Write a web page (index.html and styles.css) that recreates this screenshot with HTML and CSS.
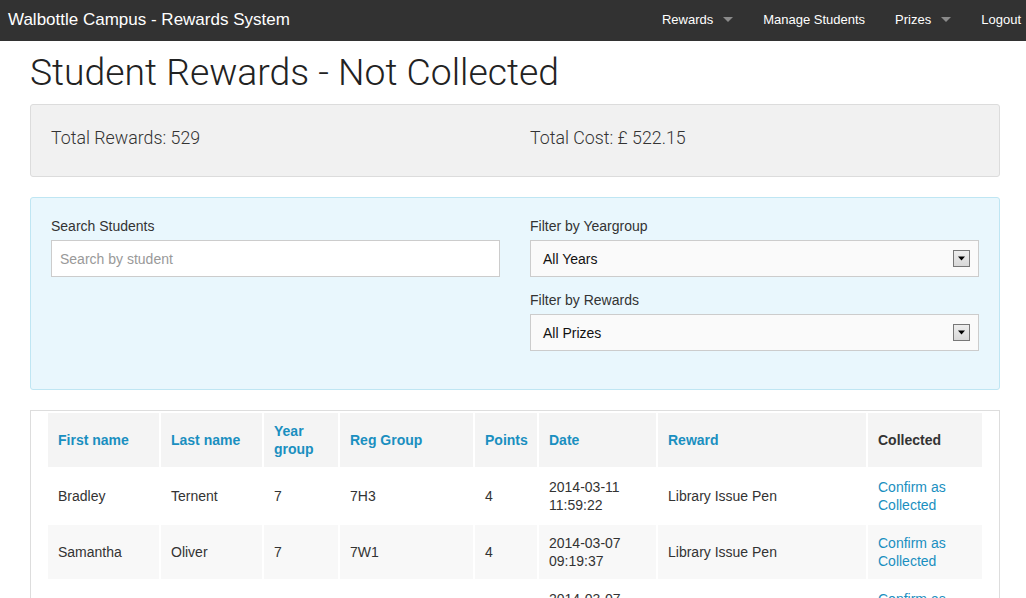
FILE: index.html
```html
<!DOCTYPE html>
<html lang="en">
<head>
<meta charset="utf-8">
<title>Student Rewards - Not Collected</title>
<link rel="stylesheet" href="styles.css">
</head>
<body>
<nav class="navbar">
  <a class="brand" href="#">Walbottle Campus - Rewards System</a>
  <ul class="nav">
    <li><a href="#">Rewards</a><span class="caret"></span></li>
    <li><a href="#">Manage Students</a></li>
    <li><a href="#">Prizes</a><span class="caret"></span></li>
    <li><a href="#">Logout</a></li>
  </ul>
</nav>
<main class="container">
  <h1 class="page-title">Student Rewards - Not Collected</h1>
  <div class="well">
    <div class="well-item">Total Rewards: 529</div>
    <div class="well-item">Total Cost: £ 522.15</div>
  </div>
  <div class="filters">
    <div class="filter-col">
      <div class="form-group">
        <label class="form-label">Search Students</label>
        <input class="form-input" type="text" placeholder="Search by student">
      </div>
    </div>
    <div class="filter-col">
      <div class="form-group">
        <label class="form-label">Filter by Yeargroup</label>
        <div class="select"><span class="select-text">All Years</span><span class="select-arrow"><svg width="9" height="5" viewBox="0 0 9 5"><path d="M1 0.5H8L4.5 4.5Z" fill="#000"/></svg></span></div>
      </div>
      <div class="form-group">
        <label class="form-label">Filter by Rewards</label>
        <div class="select"><span class="select-text">All Prizes</span><span class="select-arrow"><svg width="9" height="5" viewBox="0 0 9 5"><path d="M1 0.5H8L4.5 4.5Z" fill="#000"/></svg></span></div>
      </div>
    </div>
  </div>
  <div class="table-wrap">
    <table class="rewards">
      <colgroup>
        <col class="c1"><col class="c2"><col class="c3"><col class="c4"><col class="c5"><col class="c6"><col class="c7"><col class="c8">
      </colgroup>
      <thead>
        <tr>
          <th><a href="#">First name</a></th>
          <th><a href="#">Last name</a></th>
          <th><a href="#">Year group</a></th>
          <th><a href="#">Reg Group</a></th>
          <th><a href="#">Points</a></th>
          <th><a href="#">Date</a></th>
          <th><a href="#">Reward</a></th>
          <th>Collected</th>
        </tr>
      </thead>
      <tbody>
        <tr>
          <td>Bradley</td><td>Ternent</td><td>7</td><td>7H3</td><td>4</td>
          <td>2014-03-11 11:59:22</td><td>Library Issue Pen</td>
          <td><a href="#">Confirm as Collected</a></td>
        </tr>
        <tr>
          <td>Samantha</td><td>Oliver</td><td>7</td><td>7W1</td><td>4</td>
          <td>2014-03-07 09:19:37</td><td>Library Issue Pen</td>
          <td><a href="#">Confirm as Collected</a></td>
        </tr>
        <tr>
          <td>Jessica</td><td>Turnbull</td><td>7</td><td>7W1</td><td>4</td>
          <td>2014-03-07 09:18:52</td><td>Library Issue Pen</td>
          <td><a href="#">Confirm as Collected</a></td>
        </tr>
        <tr>
          <td>Liam</td><td>Robson</td><td>8</td><td>8H2</td><td>6</td>
          <td>2014-03-06 14:02:11</td><td>Library Issue Pen</td>
          <td><a href="#">Confirm as Collected</a></td>
        </tr>
      </tbody>
    </table>
  </div>
</main>
</body>
</html>
```
FILE: styles.css
```css
* { box-sizing: border-box; }
html, body { margin: 0; padding: 0; }
body {
  font-family: "Liberation Sans", Arial, sans-serif;
  font-size: 14px;
  color: #333;
  background: #fff;
}
a { text-decoration: none; }

.navbar {
  height: 41px;
  background: #323232;
  display: flex;
  align-items: center;
  justify-content: space-between;
  padding: 0 5px 0 8px;
}
.brand {
  color: #fff;
  font-size: 17px;
  line-height: 20px;
  padding-bottom: 2px;
}
.nav {
  list-style: none;
  margin: 0;
  padding: 0;
  display: flex;
  align-items: center;
  gap: 30px;
}
.nav li {
  display: flex;
  align-items: center;
  padding-bottom: 2px;
}
.nav a {
  color: #fff;
  font-size: 13px;
  line-height: 18px;
}
.caret {
  width: 0;
  height: 0;
  margin-left: 10px;
  border-left: 5px solid transparent;
  border-right: 5px solid transparent;
  border-top: 5px solid #8a8a8a;
}

.container {
  width: 970px;
  margin-left: 30px;
}
.page-title {
  font-family: "Roboto", "Liberation Sans", sans-serif;
  font-weight: 300;
  font-size: 37.3px;
  line-height: 40px;
  color: #222;
  margin: 11px 0 12px 0;
}
.well {
  display: grid;
  grid-template-columns: 1fr 1fr;
  column-gap: 30px;
  background: #f1f1f1;
  border: 1px solid #dcdcdc;
  border-radius: 3px;
  padding: 21px 20px 26px 20px;
  margin-bottom: 20px;
}
.well-item {
  font-family: "Roboto", "Liberation Sans", sans-serif;
  font-weight: 300;
  font-size: 17.8px;
  line-height: 24px;
  color: #333;
}

.filters {
  display: grid;
  grid-template-columns: 1fr 1fr;
  column-gap: 30px;
  background: #e9f7fd;
  border: 1px solid #bfe6f3;
  border-radius: 3px;
  padding: 20px 20px 23px 20px;
  margin-bottom: 20px;
}
.form-group { margin-bottom: 15px; }
.form-label {
  display: block;
  font-size: 14px;
  line-height: 17px;
  color: #333;
  margin-bottom: 5px;
}
.form-input {
  display: block;
  width: 100%;
  height: 37px;
  border: 1px solid #ccc;
  background: #fff;
  padding: 0 8px;
  font-family: "Liberation Sans", Arial, sans-serif;
  font-size: 14px;
  color: #333;
  outline: none;
}
.form-input::placeholder { color: #999; }
.select {
  display: flex;
  align-items: center;
  justify-content: space-between;
  height: 37px;
  border: 1px solid #ccc;
  background: #fafafa;
  padding: 0 8px 0 12px;
}
.select-text {
  color: #111;
  font-size: 14px;
}
.select-arrow {
  width: 17px;
  height: 17px;
  border: 1px solid #777;
  background: linear-gradient(#eee, #d8d8d8);
  display: flex;
  align-items: center;
  justify-content: center;
}

.table-wrap {
  border: 1px solid #ddd;
  border-bottom: none;
  padding: 0 15px;
}
.rewards {
  width: 100%;
  table-layout: fixed;
  border-collapse: separate;
  border-spacing: 2px;
}
.c1 { width: 111px; }
.c2 { width: 101px; }
.c3 { width: 74px; }
.c4 { width: 133px; }
.c5 { width: 62px; }
.c6 { width: 117px; }
.c7 { width: 208px; }
.c8 { width: 114px; }
.rewards th, .rewards td {
  padding: 9px 10px;
  line-height: 18px;
  height: 54px;
  text-align: left;
  vertical-align: middle;
  font-size: 14px;
}
.rewards th {
  background: #f4f4f4;
  font-weight: bold;
  color: #333;
}
.rewards th a { color: #1a8fc0; }
.rewards td { color: #333; }
.rewards td a { color: #1a8fc0; }
.rewards tbody tr:nth-child(even) td { background: #f8f8f8; }
```
